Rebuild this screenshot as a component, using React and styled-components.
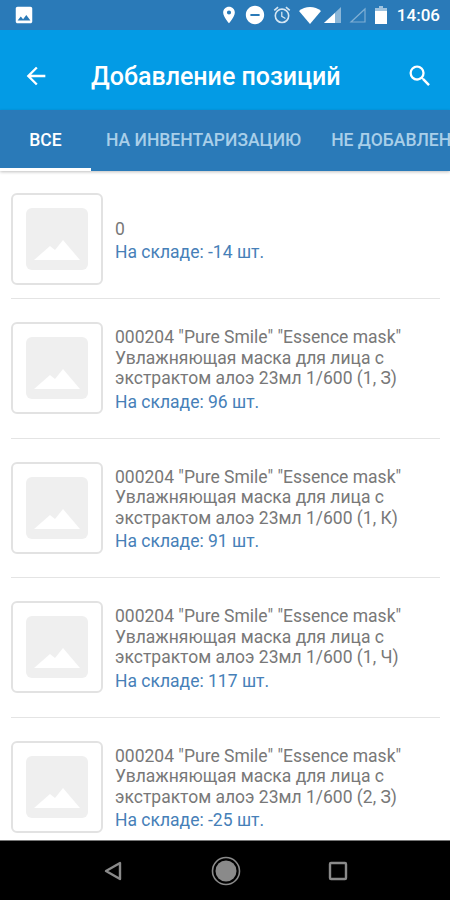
import React from 'react';
import styled, { createGlobalStyle } from 'styled-components';
import { MdArrowBack, MdSearch, MdPlace, MdDoNotDisturbOn, MdOutlineAlarm, MdImage } from 'react-icons/md';

const GlobalStyle = createGlobalStyle`
  html, body { margin: 0; padding: 0; background: #fff; }
  body { font-family: Roboto, "Liberation Sans", sans-serif; }
`;

const Screen = styled.div`
  width: 450px;
  height: 900px;
  display: flex;
  flex-direction: column;
  overflow: hidden;
`;

const StatusBar = styled.div`
  height: 30px;
  flex: none;
  display: flex;
  align-items: center;
  padding: 0 10px 0 13px;
  background: #2a7ab8;
  color: #fff;
`;

const StatusIcons = styled.div`
  margin-left: auto;
  display: flex;
  align-items: center;
`;

const StatusSlot = styled.span`
  display: flex;
  margin-left: ${p => p.$gap || 0}px;
`;

const Clock = styled.span`
  margin-left: 10px;
  font-size: 17px;
  font-weight: 500;
`;

const Toolbar = styled.header`
  height: 80px;
  flex: none;
  box-sizing: border-box;
  display: flex;
  align-items: center;
  padding: 12px 16px 0 22px;
  background: #039be5;
  color: #fff;
`;

const Title = styled.h1`
  margin: 0 0 0 41px;
  font-size: 25px;
  font-weight: 500;
  flex: 1;
`;

const Tabs = styled.nav`
  height: 61px;
  flex: none;
  display: flex;
  background: #2a7ab8;
  overflow: hidden;
  box-shadow: 0 1px 3px rgba(0, 0, 0, 0.25);
  position: relative;
`;

const Tab = styled.div`
  flex: none;
  min-width: 91px;
  box-sizing: border-box;
  padding: 2px ${p => (p.$active ? 0 : 15)}px 0;
  display: flex;
  align-items: center;
  justify-content: center;
  font-size: 17.5px;
  font-weight: 500;
  color: ${p => (p.$active ? '#fff' : '#a9cfe9')};
  border-bottom: 3px solid ${p => (p.$active ? '#fff' : 'transparent')};
  white-space: nowrap;
`;

const List = styled.main`
  flex: 1;
  min-height: 0;
  overflow: hidden;
  padding: 0 10px 0 11px;
`;

const Row = styled.div`
  display: flex;
  align-items: center;
  gap: 12px;
  padding: ${p => (p.$first ? '22px 0 13px' : '23px 0 23.5px')};
  border-bottom: 1px solid #e4e4e4;
`;

const Thumb = styled.div`
  width: 92px;
  height: 92px;
  flex: none;
  box-sizing: border-box;
  display: flex;
  align-items: center;
  justify-content: center;
  border: 2px solid #e2e2e2;
  border-radius: 6px;
`;

const Info = styled.div`
  min-width: 0;
  padding-top: 3px;
  display: flex;
  flex-direction: column;
`;

const Name = styled.div`
  font-size: 17.5px;
  line-height: 20.5px;
  color: #787878;
`;

const Stock = styled.div`
  margin-top: 3px;
  font-size: 17.5px;
  line-height: 20.5px;
  color: #4680b8;
`;

const NavBar = styled.footer`
  height: 60px;
  flex: none;
  box-sizing: border-box;
  display: flex;
  align-items: center;
  background: #000;
  border-top: 1px solid #777;
`;

const NavButton = styled.div`
  display: flex;
  align-items: center;
  justify-content: center;
  margin-left: ${p => p.$left}px;
`;

const Placeholder = () => (
  <svg width="62" height="62" viewBox="0 0 62 62">
    <rect width="62" height="62" rx="6" fill="#efefef" />
    <path d="M8 52 L24 38 L29 42 L37 32 L54 52 Z" fill="#fff" />
  </svg>
);

const WifiSolid = () => (
  <svg width="22" height="17" viewBox="0 0 22 17">
    <path d="M0 4 C6 -1.3 16 -1.3 22 4 L11 17 Z" fill="#fff" />
  </svg>
);

const SignalFull = () => (
  <svg width="17" height="16" viewBox="0 0 17 16">
    <path d="M17 0 V16 H0 Z" fill="#fff" fillOpacity="0.45" />
    <path d="M11 6 V16 H0 Z" fill="#fff" />
  </svg>
);

const SignalEmpty = () => (
  <svg width="17" height="16" viewBox="0 0 17 16">
    <path d="M16 2 V15 H2 Z" fill="none" stroke="#fff" strokeOpacity="0.4" strokeWidth="1.2" />
  </svg>
);

const Battery = () => (
  <svg width="12" height="18" viewBox="0 0 12 18">
    <path d="M4 0 H8 V2 H12 V18 H0 V2 H4 Z" fill="#fff" fillOpacity="0.55" />
    <rect y="5" width="12" height="13" fill="#fff" />
  </svg>
);

const items = [
  { name: '0', stock: -14 },
  { name: '000204 "Pure Smile" "Essence mask" Увлажняющая маска для лица с экстрактом алоэ 23мл 1/600 (1, З)', stock: 96 },
  { name: '000204 "Pure Smile" "Essence mask" Увлажняющая маска для лица с экстрактом алоэ 23мл 1/600 (1, К)', stock: 91 },
  { name: '000204 "Pure Smile" "Essence mask" Увлажняющая маска для лица с экстрактом алоэ 23мл 1/600 (1, Ч)', stock: 117 },
  { name: '000204 "Pure Smile" "Essence mask" Увлажняющая маска для лица с экстрактом алоэ 23мл 1/600 (2, З)', stock: -25 },
];

export default function App() {
  return (
    <Screen>
      <GlobalStyle />
      <StatusBar>
        <MdImage size={22} />
        <StatusIcons>
          <StatusSlot><MdPlace size={20} /></StatusSlot>
          <StatusSlot $gap={5}><MdDoNotDisturbOn size={22} /></StatusSlot>
          <StatusSlot $gap={6}><MdOutlineAlarm size={20} color="#d5e6f3" /></StatusSlot>
          <StatusSlot $gap={7}><WifiSolid /></StatusSlot>
          <StatusSlot $gap={3}><SignalFull /></StatusSlot>
          <StatusSlot $gap={8}><SignalEmpty /></StatusSlot>
          <StatusSlot $gap={9}><Battery /></StatusSlot>
          <Clock>14:06</Clock>
        </StatusIcons>
      </StatusBar>
      <Toolbar>
        <MdArrowBack size={28} />
        <Title>Добавление позиций</Title>
        <MdSearch size={28} />
      </Toolbar>
      <Tabs>
        <Tab $active>ВСЕ</Tab>
        <Tab>НА ИНВЕНТАРИЗАЦИЮ</Tab>
        <Tab>НЕ ДОБАВЛЕННЫЕ</Tab>
      </Tabs>
      <List>
        {items.map((item, i) => (
          <Row key={i} $first={i === 0}>
            <Thumb>
              <Placeholder />
            </Thumb>
            <Info>
              <Name>{item.name}</Name>
              <Stock>На складе: {item.stock} шт.</Stock>
            </Info>
          </Row>
        ))}
      </List>
      <NavBar>
        <NavButton $left={102}>
          <svg width="22" height="22" viewBox="0 0 22 22">
            <path d="M18 3 V19 L4 11 Z" fill="none" stroke="#8a8a8a" strokeWidth="2.4" strokeLinejoin="round" />
          </svg>
        </NavButton>
        <NavButton $left={87}>
          <svg width="30" height="30" viewBox="0 0 30 30">
            <circle cx="15" cy="15" r="13.5" fill="none" stroke="#8a8a8a" strokeWidth="1.6" />
            <circle cx="15" cy="15" r="10.5" fill="#8a8a8a" />
          </svg>
        </NavButton>
        <NavButton $left={87}>
          <svg width="20" height="20" viewBox="0 0 20 20">
            <rect x="2" y="2" width="16" height="16" rx="1" fill="none" stroke="#8a8a8a" strokeWidth="2.4" />
          </svg>
        </NavButton>
      </NavBar>
    </Screen>
  );
}
